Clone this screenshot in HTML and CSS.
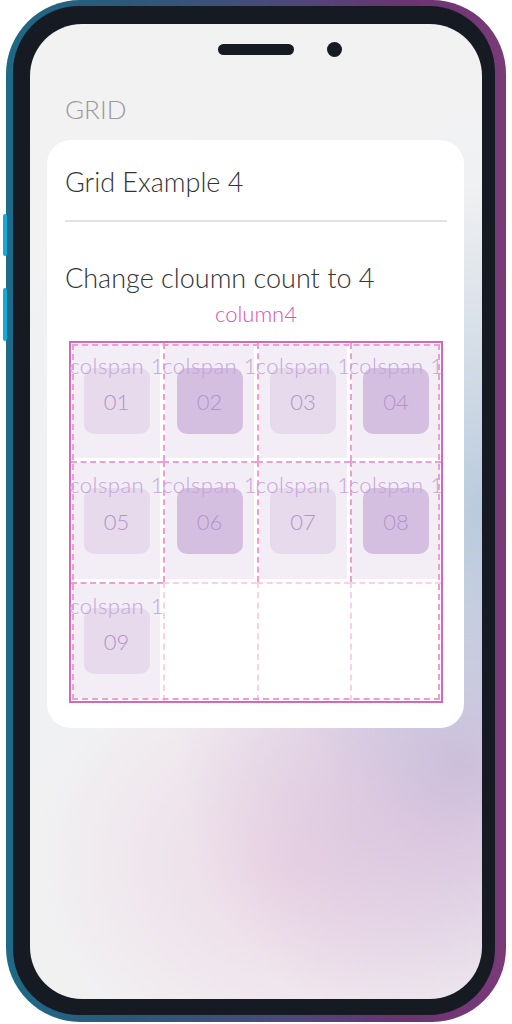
FILE: index.html
```html
<!DOCTYPE html>
<html>
<head>
<meta charset="utf-8">
<link rel="stylesheet" href="styles.css">
</head>
<body>
<div class="phone">
  <span class="side-btn side-btn-1"></span>
  <span class="side-btn side-btn-2"></span>
  <div class="bezel">
    <div class="screen">
      <div class="notch"><span class="speaker"></span><span class="camera"></span></div>
      <div class="title">GRID</div>
      <div class="card">
        <div class="card-head">Grid Example 4</div>
        <div class="divider"></div>
        <div class="desc">Change cloumn count to 4</div>
        <div class="label">column4</div>
        <div class="grid-frame">
          <div class="grid">
            <div class="cell"><div class="item"><span class="cap">colspan 1</span><span class="box light">01</span></div></div>
            <div class="cell"><div class="item"><span class="cap">colspan 1</span><span class="box dark">02</span></div></div>
            <div class="cell"><div class="item"><span class="cap">colspan 1</span><span class="box light">03</span></div></div>
            <div class="cell"><div class="item"><span class="cap">colspan 1</span><span class="box dark">04</span></div></div>
            <div class="cell"><div class="item"><span class="cap">colspan 1</span><span class="box light">05</span></div></div>
            <div class="cell"><div class="item"><span class="cap">colspan 1</span><span class="box dark">06</span></div></div>
            <div class="cell"><div class="item"><span class="cap">colspan 1</span><span class="box light">07</span></div></div>
            <div class="cell"><div class="item"><span class="cap">colspan 1</span><span class="box dark">08</span></div></div>
            <div class="cell"><div class="item"><span class="cap">colspan 1</span><span class="box light">09</span></div></div>
            <div class="cell empty"></div>
            <div class="cell empty"></div>
            <div class="cell empty"></div>
          </div>
        </div>
      </div>
    </div>
  </div>
</div>
</body>
</html>
```

FILE: styles.css
```css
html, body {
  margin: 0;
  padding: 0;
  background: #ffffff;
}
body {
  width: 512px;
  height: 1024px;
  overflow: hidden;
  font-family: Lato, "Noto Sans", sans-serif;
}
.phone {
  position: relative;
  margin-left: 6px;
  width: 500px;
  height: 1022px;
  box-sizing: border-box;
  padding: 6px 11px 7px 7px;
  border-radius: 74px;
  background: linear-gradient(90deg, #1e6a86 0%, #2c5878 25%, #4a4a7a 55%, #6a3470 80%, #7a3a78 100%);
}
.side-btn {
  position: absolute;
  left: -3px;
  width: 4px;
  border-radius: 2px;
  background: #17a9d6;
}
.side-btn-1 { top: 214px; height: 42px; }
.side-btn-2 { top: 288px; height: 53px; }
.bezel {
  height: 100%;
  box-sizing: border-box;
  padding: 18px 13px 16px 17px;
  border-radius: 66px;
  background: #161a22;
}
.screen {
  height: 100%;
  border-radius: 52px;
  overflow: hidden;
  background:
    radial-gradient(ellipse 240px 330px at 100% 50%, rgba(176, 196, 218, 0.85), rgba(176, 196, 218, 0) 100%),
    radial-gradient(ellipse 280px 280px at 95% 76%, rgba(204, 178, 214, 0.8), rgba(204, 178, 214, 0) 100%),
    radial-gradient(ellipse 260px 220px at 58% 86%, rgba(236, 212, 228, 0.85), rgba(236, 212, 228, 0) 100%),
    linear-gradient(160deg, #f2f2f2 0%, #f0f1f2 40%, #f2f1f2 100%);
  display: flex;
  flex-direction: column;
}
.notch {
  display: flex;
  align-items: center;
  gap: 33px;
  margin: 18px 0 0 188px;
  height: 15px;
}
.speaker {
  width: 76px;
  height: 11px;
  border-radius: 6px;
  background: #161a22;
}
.camera {
  width: 15px;
  height: 15px;
  border-radius: 50%;
  background: #161a22;
}
.title {
  margin: 36px 0 0 35px;
  font-size: 26px;
  line-height: 32px;
  font-weight: 300;
  color: #9a9a9a;
}
.card {
  margin: 15px 0 0 17px;
  width: 417px;
  box-sizing: border-box;
  padding: 26px 17px 25px 18px;
  border-radius: 24px;
  background: #ffffff;
}
.card-head {
  font-size: 27px;
  line-height: 32px;
  font-weight: 300;
  color: #333333;
}
.divider {
  margin-top: 22px;
  height: 2px;
  background: #e2e2e2;
}
.desc {
  margin-top: 40px;
  font-size: 27px;
  line-height: 32px;
  font-weight: 300;
  color: #333333;
}
.label {
  margin-top: 7px;
  text-align: center;
  font-size: 22px;
  line-height: 26px;
  font-weight: 300;
  color: #d455b2;
}
.grid-frame {
  margin: 14px 4px 0 4px;
  border: 2px solid #d468b8;
}
.grid {
  display: grid;
  grid-template-columns: 92px 94px 93px 91px;
  grid-template-rows: 118px 121px 119px;
  outline: 2px dashed #ee9ed2;
  outline-offset: -3px;
}
.cell {
  display: flex;
  min-width: 0;
  border-left: 2px dashed #ee9ed2;
  border-top: 2px dashed #ee9ed2;
}
.cell:nth-child(4n+1) { border-left: none; }
.cell:nth-child(-n+4) { border-top: none; }
.cell.empty { border-color: #f8d0e8; }
.item {
  flex: 1;
  margin: 0 3px 3px 0;
  background: #f3edf6;
  display: grid;
  grid-template-columns: minmax(0, 1fr);
  grid-template-rows: minmax(0, 1fr);
  justify-items: center;
  min-width: 0;
}
.cell:nth-child(4n+1) .item { margin-left: 2px; }
.cell:nth-child(-n+4) .item { margin-top: 1px; }
.cell:nth-child(4n) .item { margin-right: 1px; }
.cap, .box {
  grid-area: 1 / 1;
}
.cap {
  align-self: start;
  justify-self: unsafe center;
  margin-top: 9px;
  position: relative;
  z-index: 1;
  white-space: nowrap;
  font-size: 22px;
  line-height: 26px;
  letter-spacing: 0.5px;
  font-weight: 300;
  color: #c5a6da;
}
.box {
  align-self: center;
  justify-self: center;
  width: 66px;
  height: 66px;
  border-radius: 10px;
  display: flex;
  align-items: center;
  justify-content: center;
  font-size: 22px;
  font-weight: 300;
  color: #b493cc;
}
.box.light { background: #e7daec; }
.box.dark { background: #d4bfe1; }
```
